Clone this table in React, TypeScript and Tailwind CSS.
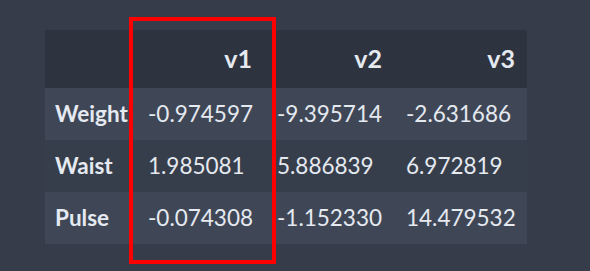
const ROWS = [
  { name: "Weight", v: ["-0.974597", "-9.395714", "-2.631686"] },
  { name: "Waist", v: ["1.985081", "5.886839", "6.972819"] },
  { name: "Pulse", v: ["-0.074308", "-1.152330", "14.479532"] },
];

export default function App() {
  return (
    <div
      className="relative w-[590px] h-[271px] bg-[#363c49] overflow-hidden"
      style={{ fontFamily: "Lato, 'Open Sans', sans-serif" }}
    >
      <div className="pt-[30px] pl-[45px]">
        <table className="w-[482px] border-collapse table-fixed text-[22.5px] text-[#e5e9f0]">
          <colgroup>
            <col className="w-[91px]" />
            <col className="w-[129px]" />
            <col className="w-[129px]" />
            <col className="w-[133px]" />
          </colgroup>
          <thead>
            <tr className="h-[58px] bg-[#2e343f] text-[25px]">
              <th />
              <th className="text-right font-bold pr-[13px]">v1</th>
              <th className="text-right font-bold pr-[12px]">v2</th>
              <th className="text-right font-bold pr-[12px]">v3</th>
            </tr>
          </thead>
          <tbody>
            {ROWS.map((r, i) => (
              <tr
                key={r.name}
                className={`h-[52px] ${i % 2 === 0 ? "bg-[#3f4757]" : "bg-[#373e4b]"}`}
              >
                <td className="pl-[10px] font-bold">{r.name}</td>
                {r.v.map((x) => (
                  <td key={x} className="pl-[12px] whitespace-nowrap">
                    {x}
                  </td>
                ))}
              </tr>
            ))}
          </tbody>
        </table>
      </div>
      {/* highlight box */}
      <div className="absolute left-[129px] top-[17px] w-[147px] h-[247px] border-4 border-[#ff0000]" />
    </div>
  );
}
